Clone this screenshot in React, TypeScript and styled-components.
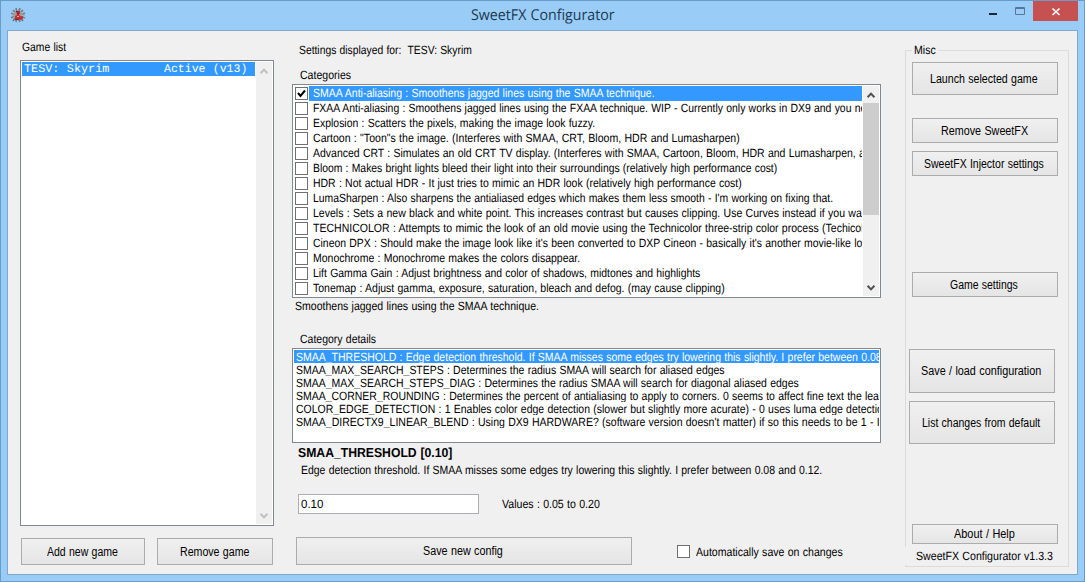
import React, { useLayoutEffect, useRef, useState } from "react";
import styled, { createGlobalStyle } from "styled-components";

const GlobalStyle = createGlobalStyle`
  * { box-sizing: border-box; }
  body {
    margin: 0;
    overflow: hidden;
    font-family: "Liberation Sans", Arial, sans-serif;
    font-size: 12px;
    color: #000;
    text-rendering: geometricPrecision;
  }
`;

/* A line of text condensed horizontally so that it spans a given width. */
const Run = styled.span`
  display: inline-block;
  white-space: pre;
  flex: none;
`;

const Glyphs = styled.span`
  display: inline-block;
  transform-origin: 0 50%;
  word-spacing: 0.4px;
`;

function Line({ w, children }: { w: number; children: string }) {
  const ref = useRef<HTMLSpanElement>(null);
  const [scale, setScale] = useState(1);
  useLayoutEffect(() => {
    if (ref.current) setScale(w / ref.current.offsetWidth);
  }, [w, children]);
  return (
    <Run style={{ width: w }}>
      <Glyphs ref={ref} style={{ transform: `scaleX(${scale})` }}>
        {children}
      </Glyphs>
    </Run>
  );
}

const Window = styled.div`
  width: 1085px;
  height: 582px;
  display: flex;
  flex-direction: column;
  background: #99ccf7;
  border: 1px solid #6a9cc8;
  padding: 0 6px 6px;
`;

const TitleBar = styled.header`
  height: 29px;
  flex: none;
  display: grid;
  grid-template-columns: 150px 1fr 150px;
  align-items: start;
`;

const AppIcon = styled.svg`
  display: block;
  margin: 6px 0 0 3px;
`;

const Title = styled.div`
  justify-self: center;
  font: 15px/29px "Open Sans", sans-serif;
  color: #1c3850;
`;

const Controls = styled.div`
  display: flex;
  justify-content: flex-end;
`;

const Control = styled.div<{ $w: number; $close?: boolean }>`
  width: ${(p) => p.$w}px;
  height: 20px;
  background: ${(p) => (p.$close ? "#c75050" : "transparent")};
  svg { display: block; }
`;

const Client = styled.main`
  flex: 1;
  display: flex;
  align-items: flex-start;
  background: #f0f0f0;
  border: 1px solid #7fa9cc;
`;

const GameColumn = styled.section`
  width: 254px;
  margin-left: 12px;
`;

const Caption = styled.div<{ $top?: number; $h?: number; $x?: number }>`
  display: flex;
  margin-top: ${(p) => p.$top ?? 0}px;
  height: ${(p) => p.$h ?? 16}px;
  line-height: ${(p) => p.$h ?? 16}px;
  padding-left: ${(p) => p.$x ?? 0}px;
`;

const Heading = styled(Caption)`
  font-size: 13px;
  font-weight: bold;
`;

const VersionLabel = styled.div`
  height: 18px;
  line-height: 19px;
  margin: 3px 4px 0 -7px;
  padding-left: 11px;
  background: #f0f0f0;
`;

const ListBox = styled.div<{ $h: number }>`
  display: flex;
  height: ${(p) => p.$h}px;
  background: #fff;
  border: 1px solid #828790;
  padding: 1px;
`;

const Rows = styled.div`
  flex: 1;
  min-width: 0;
  overflow: hidden;
`;

const GameRow = styled.div`
  display: flex;
  height: 14px;
  gap: 55px;
  padding-left: 2px;
  margin-right: 1px;
  font: 11.67px/15px "Liberation Mono", monospace;
  color: #fff;
  background: #3399ff;
`;

const Scroll = styled.div`
  width: 16px;
  flex: none;
  display: flex;
  flex-direction: column;
  justify-content: space-between;
  background: #f0f0f0;
  svg { display: block; }
`;

const Thumb = styled.div`
  height: 112px;
  margin-bottom: auto;
  background: #cdcdcd;
`;

const Button = styled.button<{ $w: number; $h: number; $top?: number; $left?: number }>`
  display: flex;
  align-items: center;
  justify-content: center;
  flex: none;
  width: ${(p) => p.$w}px;
  height: ${(p) => p.$h}px;
  margin: ${(p) => p.$top ?? 0}px 0 0 ${(p) => p.$left ?? 0}px;
  padding: 0 2px 0 0;
  font: inherit;
  color: #000;
  border: 1px solid #acacac;
  background: linear-gradient(#f0f0f0, #e5e5e5);
`;

const GameButtons = styled.div`
  display: flex;
  gap: 12px;
  margin: 12px 0 0 1px;
`;

const SettingsColumn = styled.section`
  width: 589px;
  margin-left: 18px;
`;

const CategoryRow = styled.div<{ $on?: boolean }>`
  display: flex;
  align-items: center;
  height: 15px;
  padding-left: 1px;
  margin-right: 1px;
  overflow: hidden;
  color: ${(p) => (p.$on ? "#fff" : "#000")};
`;

const CategoryText = styled.div<{ $on?: boolean }>`
  flex: 1;
  min-width: 0;
  overflow: hidden;
  height: 15px;
  line-height: 15px;
  margin-left: 1px;
  padding-left: 4px;
  background: ${(p) => (p.$on ? "#3399ff" : "transparent")};
`;

const Box = styled.div`
  width: 13px;
  height: 13px;
  flex: none;
  background: #fff;
  border: 1px solid #707070;
  svg { display: block; }
`;

const DetailRow = styled.div<{ $on?: boolean }>`
  height: 13px;
  line-height: 14px;
  padding-left: 2px;
  overflow: hidden;
  color: ${(p) => (p.$on ? "#fff" : "#000")};
  background: ${(p) => (p.$on ? "#3399ff" : "transparent")};
`;

const ValueRow = styled.div`
  display: flex;
  align-items: center;
  margin: 16px 0 0 6px;
  height: 20px;
`;

const Field = styled.div`
  width: 181px;
  height: 20px;
  line-height: 19px;
  padding-left: 2px;
  margin-right: 23px;
  background: #fff;
  border: 1px solid #abadb3;
`;

const SaveRow = styled.div`
  display: flex;
  align-items: center;
  margin: 23px 0 0 4px;
`;

const AutoSave = styled.label`
  display: flex;
  align-items: center;
  gap: 6px;
  margin-left: 45px;
  padding-top: 1px;
`;

const Misc = styled.fieldset`
  width: 164px;
  height: 524px;
  margin: 12px 0 0 24px;
  padding: 0 0 0 6px;
  min-width: 0;
  border: 1px solid #dcdcdc;
  legend {
    height: 14px;
    line-height: 14px;
    margin-left: 0;
    padding: 0 3px 0 2px;
  }
`;

function Arrow({ up, color }: { up?: boolean; color: string }) {
  return (
    <svg width="16" height="17" viewBox="0 0 16 17">
      <path
        d={up ? "M4.6 11.2L8 7.6l3.4 3.6" : "M4.6 6.8L8 10.4l3.4-3.6"}
        fill="none"
        stroke={color}
        strokeWidth="2"
      />
    </svg>
  );
}

const categories: [string, number][] = [
  ["SMAA Anti-aliasing : Smoothens jagged lines using the SMAA technique.", 342],
  ["FXAA Anti-aliasing : Smoothens jagged lines using the FXAA technique. WIP - Currently only works in DX9 and you ne", 553],
  ["Explosion : Scatters the pixels, making the image look fuzzy.", 282],
  ["Cartoon : \"Toon\"s the image. (Interferes with SMAA, CRT, Bloom, HDR and Lumasharpen)", 427],
  ["Advanced CRT : Simulates an old CRT TV display. (Interferes with SMAA, Cartoon, Bloom, HDR and Lumasharpen, a", 552],
  ["Bloom : Makes bright lights bleed their light into their surroundings (relatively high performance cost)", 464],
  ["HDR : Not actual HDR - It just tries to mimic an HDR look (relatively high performance cost)", 429],
  ["LumaSharpen : Also sharpens the antialiased edges which makes them less smooth - I'm working on fixing that.", 520],
  ["Levels : Sets a new black and white point. This increases contrast but causes clipping. Use Curves instead if you wa", 549],
  ["TECHNICOLOR : Attempts to mimic the look of an old movie using the Technicolor three-strip color process (Techicol", 551],
  ["Cineon DPX : Should make the image look like it's been converted to DXP Cineon - basically it's another movie-like lo", 549],
  ["Monochrome : Monochrome makes the colors disappear.", 267],
  ["Lift Gamma Gain : Adjust brightness and color of shadows, midtones and highlights", 387],
  ["Tonemap : Adjust gamma, exposure, saturation, bleach and defog. (may cause clipping)", 412],
];

const details: [string, number][] = [
  ["SMAA_THRESHOLD : Edge detection threshold. If SMAA misses some edges try lowering this slightly. I prefer between 0.08", 586],
  ["SMAA_MAX_SEARCH_STEPS : Determines the radius SMAA will search for aliased edges", 429],
  ["SMAA_MAX_SEARCH_STEPS_DIAG : Determines the radius SMAA will search for diagonal aliased edges", 503],
  ["SMAA_CORNER_ROUNDING : Determines the percent of antialiasing to apply to corners. 0 seems to affect fine text the lea", 583],
  ["COLOR_EDGE_DETECTION : 1 Enables color edge detection (slower but slightly more acurate) - 0 uses luma edge detectio", 587],
  ["SMAA_DIRECTX9_LINEAR_BLEND : Using DX9 HARDWARE? (software version doesn't matter) if so this needs to be 1 - I", 584],
];

export default function App() {
  return (
    <>
      <GlobalStyle />
      <Window>
        <TitleBar>
          <AppIcon width="16" height="16" viewBox="0 0 16 16">
            <path d="M3 3l3 3M6 1l1 4M10 1L9 5M13 3l-3 3M1 6l4 2M15 6l-4 2M1 11l4-2M15 11l-4-2M3 14l3-4M6 15l1-4M10 15l-1-4M13 14l-3-4" stroke="#65717a" strokeWidth="1.3" />
            <path d="M5 2.5h6l3 3v5l-3 3H5l-3-3v-5z" fill="none" stroke="#8b8f94" strokeDasharray="1.5 1.5" />
            <circle cx="8" cy="8" r="4.6" fill="#a69a98" />
            <path d="M6 4h4v3H9l1 2 3 .5v2L11 13l-2-1H5V9l2-1z" fill="#c52e36" />
            <path d="M6 4h3v1H6zM7 6h2v1H7zM5 12h4v1H5z" fill="#68292d" />
            <path d="M7 9h2v1H7z" fill="#e6a4a0" />
          </AppIcon>
          <Title>
            <Line w={144}>SweetFX Configurator</Line>
          </Title>
          <Controls>
            <Control $w={27}>
              <svg width="27" height="20"><path d="M10 12h8v2h-8z" fill="#16293a" /></svg>
            </Control>
            <Control $w={27}>
              <svg width="27" height="20"><path d="M9.5 6.5h9v7h-9zM9 7.5h10" fill="none" stroke="#56779a" /></svg>
            </Control>
            <Control $w={45} $close>
              <svg width="45" height="20"><path d="M19.5 7.5l7 6.5M26.5 7.5l-7 6.5" stroke="#fff" strokeWidth="1.7" /></svg>
            </Control>
          </Controls>
        </TitleBar>
        <Client>
          <GameColumn>
            <Caption $top={8} $h={16} $x={2}><Line w={44}>Game list</Line></Caption>
            <Caption $h={5} />
            <ListBox $h={466}>
              <Rows>
                <GameRow>
                  <Line w={85}>TESV: Skyrim</Line>
                  <Line w={83}>Active (v13)</Line>
                </GameRow>
              </Rows>
              <Scroll><Arrow up color="#bfbfbf" /><Arrow color="#bfbfbf" /></Scroll>
            </ListBox>
            <GameButtons>
              <Button $w={124} $h={27}><Line w={71}>Add new game</Line></Button>
              <Button $w={116} $h={27}><Line w={69}>Remove game</Line></Button>
            </GameButtons>
          </GameColumn>
          <SettingsColumn>
            <Caption $top={11} $x={7}><Line w={173}>{"Settings displayed for:  TESV: Skyrim"}</Line></Caption>
            <Caption $top={9} $x={8} $h={17}><Line w={51}>Categories</Line></Caption>
            <ListBox $h={214}>
              <Rows>
                {categories.map(([text, w], i) => (
                  <CategoryRow key={text} $on={i === 0}>
                    <Box>
                      {i === 0 && (
                        <svg width="11" height="11"><path d="M2 5l2.5 3L9 2.5" fill="none" stroke="#000" strokeWidth="2" /></svg>
                      )}
                    </Box>
                    <CategoryText $on={i === 0}><Line w={w}>{text}</Line></CategoryText>
                  </CategoryRow>
                ))}
              </Rows>
              <Scroll><Arrow up color="#505050" /><Thumb /><Arrow color="#505050" /></Scroll>
            </ListBox>
            <Caption $x={3}><Line w={244}>Smoothens jagged lines using the SMAA technique.</Line></Caption>
            <Caption $top={17} $h={17} $x={8}><Line w={76}>Category details</Line></Caption>
            <ListBox $h={95}>
              <Rows>
                {details.map(([text, w], i) => (
                  <DetailRow key={text} $on={i === 0}><Line w={w}>{text}</Line></DetailRow>
                ))}
              </Rows>
            </ListBox>
            <Heading $top={2} $x={6}><Line w={154}>SMAA_THRESHOLD [0.10]</Line></Heading>
            <Caption $top={1} $x={9}><Line w={521}>Edge detection threshold. If SMAA misses some edges try lowering this slightly. I prefer between 0.08 and 0.12.</Line></Caption>
            <ValueRow>
              <Field><Line w={22}>0.10</Line></Field>
              <Line w={98}>Values : 0.05 to 0.20</Line>
            </ValueRow>
            <SaveRow>
              <Button $w={336} $h={28}><Line w={80}>Save new config</Line></Button>
              <AutoSave><Box /><Line w={147}>Automatically save on changes</Line></AutoSave>
            </SaveRow>
          </SettingsColumn>
          <Misc>
            <legend><Line w={22}>Misc</Line></legend>
            <Button $w={146} $h={33} $top={5}><Line w={108}>Launch selected game</Line></Button>
            <Button $w={146} $h={25} $top={23}><Line w={87}>Remove SweetFX</Line></Button>
            <Button $w={146} $h={25} $top={8}><Line w={120}>SweetFX Injector settings</Line></Button>
            <Button $w={146} $h={25} $top={96}><Line w={68}>Game settings</Line></Button>
            <Button $w={146} $h={44} $top={52} $left={-3}><Line w={120}>Save / load configuration</Line></Button>
            <Button $w={146} $h={43} $top={8} $left={-3}><Line w={118}>List changes from default</Line></Button>
            <Button $w={146} $h={20} $top={80}><Line w={61}>About / Help</Line></Button>
            <VersionLabel><Line w={137}>SweetFX Configurator v1.3.3</Line></VersionLabel>
          </Misc>
        </Client>
      </Window>
    </>
  );
}
